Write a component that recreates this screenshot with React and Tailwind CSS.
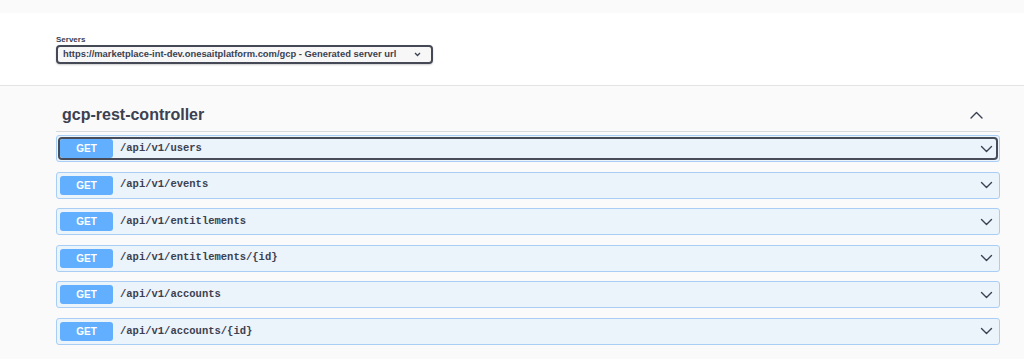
import React from "react";

const endpoints = [
  "/api/v1/users",
  "/api/v1/events",
  "/api/v1/entitlements",
  "/api/v1/entitlements/{id}",
  "/api/v1/accounts",
  "/api/v1/accounts/{id}",
];

function Chevron({ up = false, className = "" }) {
  return (
    <svg
      width="13"
      height="8"
      viewBox="0 0 13 8"
      className={className}
      fill="none"
      stroke="#3b4151"
      strokeWidth="1.4"
      strokeLinecap="round"
      strokeLinejoin="round"
    >
      {up ? <polyline points="1,7 6.5,1.5 12,7" /> : <polyline points="1.5,1.5 6.5,6.5 11.5,1.5" />}
    </svg>
  );
}

function Row({ path, focused }) {
  return (
    <div className="h-[27px] border border-[#a9cef6] bg-[#ebf3fb] rounded-[3px] p-[3px]">
      <div
        className={
          focused
            ? "h-full flex items-center rounded-[2px] outline-2 outline-[#474c58]"
            : "h-full flex items-center"
        }
      >
        <div className="w-[53px] h-[19px] shrink-0 rounded-[3px] bg-[#61affe] text-white text-[10px] font-bold flex items-center justify-center">
          GET
        </div>
        <div
          className="ml-[7px] text-[10.5px] font-bold text-[#3b4151] flex-1"
          style={{ fontFamily: '"Liberation Mono", monospace' }}
        >
          {path}
        </div>
        <Chevron className="mr-[3px]" />
      </div>
    </div>
  );
}

export default function App() {
  return (
    <div
      className="min-h-screen bg-[#fafafa] text-[#3b4151]"
      style={{ fontFamily: '"Liberation Sans", Arial, sans-serif' }}
    >
      {/* top strip */}
      <div className="h-[13px]" />

      {/* servers */}
      <div className="h-[73px] bg-white border-b border-[#e4e4e4] pl-[56px] pt-[22px]">
        <div className="text-[8px] font-bold leading-[9px] mb-[1px]">Servers</div>
        <div className="w-[377px] h-[19px] border-2 border-[#454955] rounded-[4px] bg-[#f7f7f7] flex items-center pl-[5px] pr-[10px] shadow-[0_1px_2px_rgba(0,0,0,0.2)]">
          <span className="flex-1 text-[9.4px] font-bold whitespace-nowrap">
            https://marketplace-int-dev.onesaitplatform.com/gcp - Generated server url
          </span>
          <svg width="7" height="5" viewBox="0 0 7 5" fill="none" stroke="#3b4151" strokeWidth="1.3">
            <polyline points="1,1 3.5,3.5 6,1" />
          </svg>
        </div>
      </div>

      {/* controller */}
      <div className="pl-[56px] pr-[24px] pt-[12px]">
        <div className="h-[34px] flex items-center justify-between border-b border-[#d8d9dc] pl-[6px] pr-[17px]">
          <h3 className="text-[16px] font-bold">gcp-rest-controller</h3>
          <Chevron up />
        </div>
        <div className="mt-[3px] flex flex-col gap-[9.6px]">
          {endpoints.map((p, i) => (
            <Row key={p} path={p} focused={i === 0} />
          ))}
        </div>
      </div>
    </div>
  );
}
